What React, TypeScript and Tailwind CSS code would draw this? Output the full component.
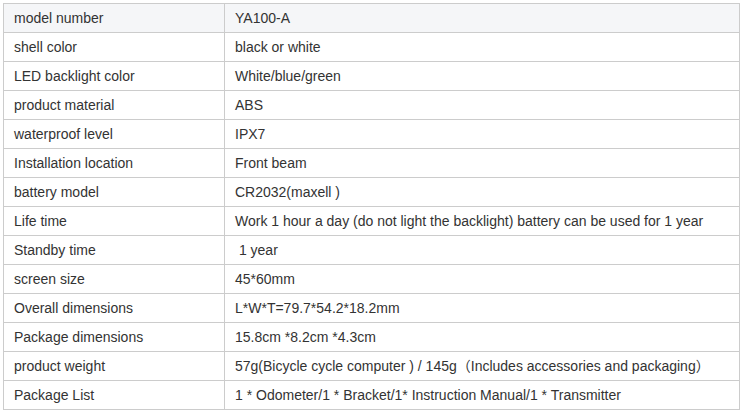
const rows: [string, string][] = [
  ["model number", "YA100-A"],
  ["shell color", "black or white"],
  ["LED backlight color", "White/blue/green"],
  ["product material", "ABS"],
  ["waterproof level", "IPX7"],
  ["Installation location", "Front beam"],
  ["battery model", "CR2032(maxell )"],
  ["Life time", "Work 1 hour a day (do not light the backlight) battery can be used for 1 year"],
  ["Standby time", "\u00a01 year"],
  ["screen size", "45*60mm"],
  ["Overall dimensions", "L*W*T=79.7*54.2*18.2mm"],
  ["Package dimensions", "15.8cm *8.2cm *4.3cm"],
  ["product weight", "57g(Bicycle cycle computer ) / 145g\uff08Includes accessories and packaging\uff09"],
  ["Package List", "1 * Odometer/1 * Bracket/1* Instruction Manual/1 * Transmitter"],
];

export default function App() {
  return (
    <div className="h-[412px] w-[742px] bg-white pl-[3px] pt-[3px] font-['Liberation_Sans','Noto_Sans_CJK_SC',Arial,sans-serif] text-[14px] text-[#333]">
      <div className="w-[737px] border-l border-t border-[#cccccc]">
        {rows.map(([label, value], i) => (
          <div key={label} className={`flex ${i === 0 ? "bg-[#f5f6f8]" : "bg-white"}`}>
            <div className="h-[29px] w-[221px] shrink-0 border-b border-r border-[#cccccc] px-[10px] leading-[28px]">
              {label}
            </div>
            <div className="h-[29px] flex-1 whitespace-nowrap border-b border-r border-[#cccccc] px-[10px] leading-[28px]">
              {value}
            </div>
          </div>
        ))}
      </div>
    </div>
  );
}
